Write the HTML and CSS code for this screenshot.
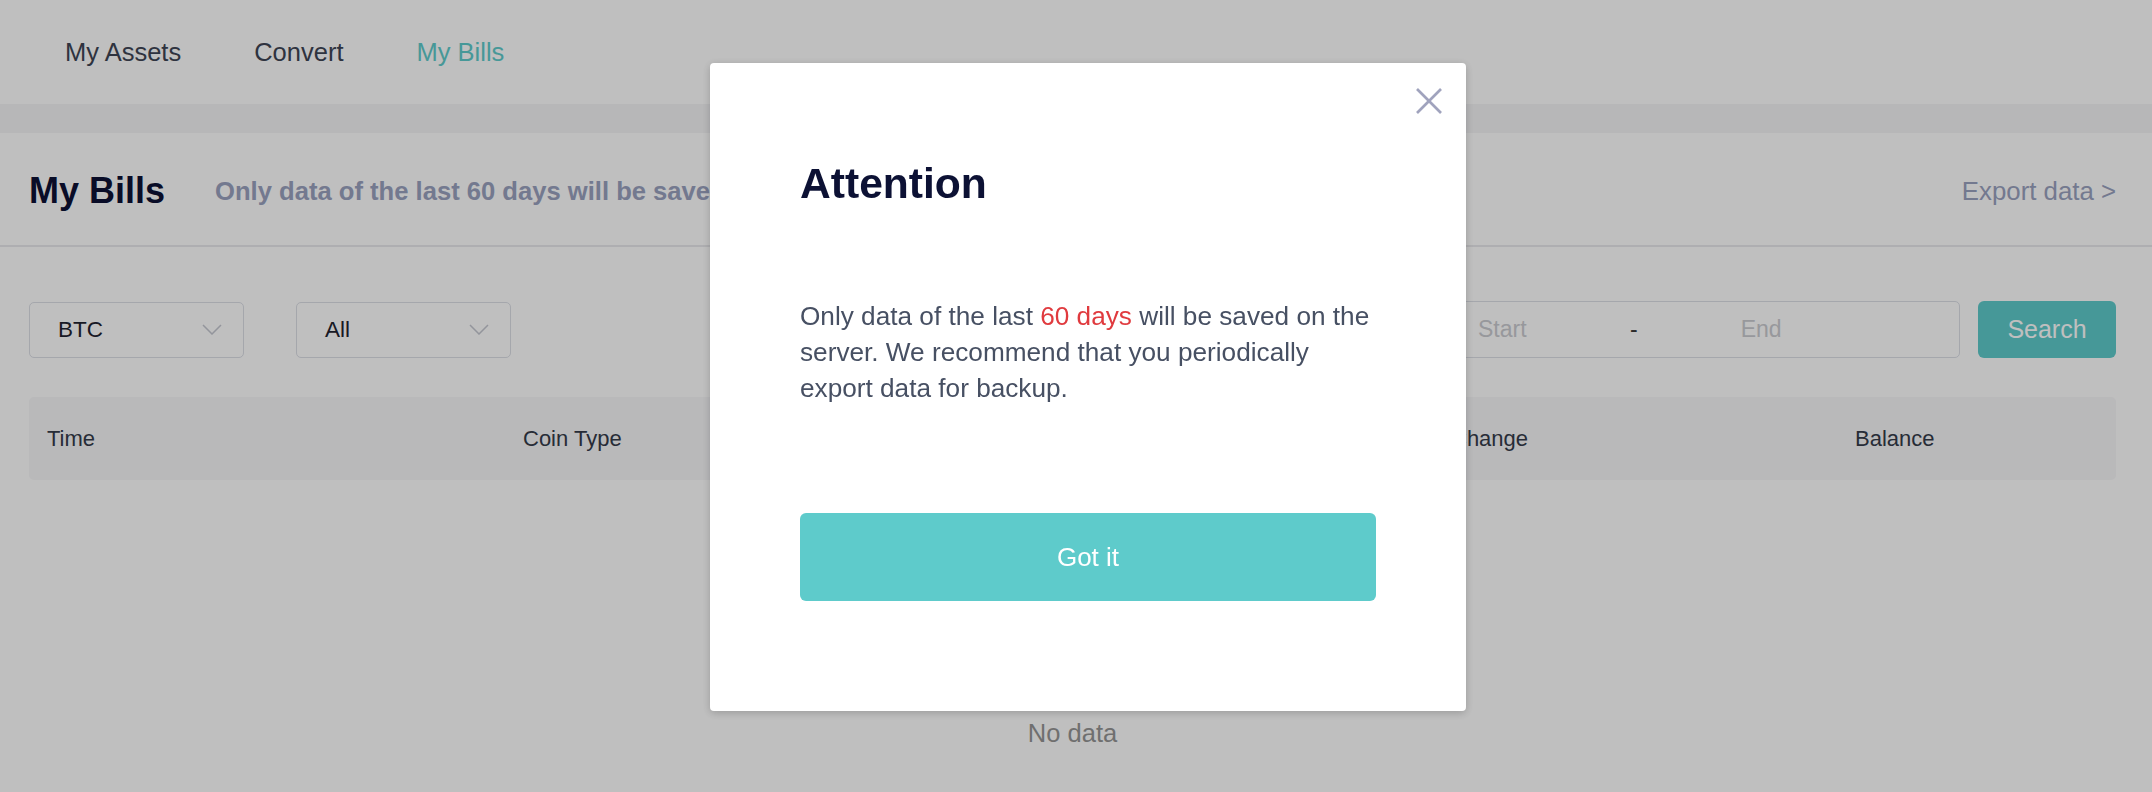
FILE: index.html
```html
<!DOCTYPE html>
<html lang="en">
<head>
    <meta charset="UTF-8">
    <meta name="viewport" content="width=device-width, initial-scale=1.0">
    <title>My Bills</title>
    <link rel="stylesheet" href="styles.css">
</head>
<body>
    <div class="topnav">
        <a href="#" class="navlink">My Assets</a>
        <a href="#" class="navlink">Convert</a>
        <a href="#" class="navlink active">My Bills</a>
    </div>
    <div class="strip"></div>

    <div class="pagehead">
        <h1 class="title">My Bills</h1>
        <span class="notice">Only data of the last 60 days will be saved on the server</span>
        <a href="#" class="export">Export data &gt;</a>
    </div>

    <div class="page">
        <div class="filters">
            <div class="select">
                <span>BTC</span>
                <svg class="chev" width="20" height="11" viewBox="0 0 20 11"><polyline points="1,1 10,10 19,1" /></svg>
            </div>
            <div class="select select-type">
                <span>All</span>
                <svg class="chev" width="20" height="11" viewBox="0 0 20 11"><polyline points="1,1 10,10 19,1" /></svg>
            </div>
            <div class="daterange">
                <span class="ph ph-start">Start</span>
                <span class="dash">-</span>
                <span class="ph ph-end">End</span>
            </div>
            <button class="search">Search</button>
        </div>

        <div class="thead">
            <span class="col col-time">Time</span>
            <span class="col col-coin">Coin Type</span>
            <span class="col col-type">Type</span>
            <span class="col col-change">Change</span>
            <span class="col">Balance</span>
        </div>
        <div class="empty">No data</div>
    </div>

    <!-- notice dialog -->
    <div class="mask"></div>
    <div class="dialog">
        <svg class="close" width="28" height="28" viewBox="0 0 28 28">
            <line x1="2" y1="2" x2="26" y2="26" />
            <line x1="26" y1="2" x2="2" y2="26" />
        </svg>
        <h2 class="dialog-title">Attention</h2>
        <p class="dialog-text">Only data of the last <span class="red">60 days</span> will be saved on the server. We recommend that you periodically export data for backup.</p>
        <button class="gotit">Got it</button>
    </div>
</body>
</html>
```

FILE: styles.css
```css
body {
    margin: 0;
    background: #fff;
    font-family: "Liberation Sans", Arial, sans-serif;
}

.topnav {
    height: 104px;
    display: flex;
    align-items: center;
    gap: 73px;
    padding-left: 65px;
}
.navlink {
    font-size: 25.5px;
    color: #3e4555;
    text-decoration: none;
}
.navlink.active {
    color: #5ecbcb;
}
.strip {
    height: 29px;
    background: #f4f4f6;
}

.pagehead {
    height: 114px;
    display: flex;
    align-items: center;
    padding: 4px 36px 0 29px;
    box-sizing: border-box;
    border-bottom: 2px solid #e9e9ec;
}
.title {
    margin: 0;
    font-size: 36px;
    font-weight: 700;
    color: #0c1134;
}
.notice {
    margin-left: 50px;
    font-size: 25.6px;
    font-weight: 700;
    color: #9aa2bf;
}
.export {
    margin-left: auto;
    font-size: 25.8px;
    color: #9aa2bf;
    text-decoration: none;
}

.page {
    padding: 0 36px 0 29px;
}
.filters {
    display: flex;
    align-items: center;
    margin-top: 54px;
    height: 57px;
}
.select {
    box-sizing: border-box;
    width: 215px;
    height: 56px;
    display: flex;
    align-items: center;
    justify-content: space-between;
    padding: 0 21px 0 28px;
    border: 1px solid #dcdfe6;
    border-radius: 5px;
    font-size: 22.5px;
    color: #1f2330;
}
.select-type {
    margin-left: 52px;
}
.chev polyline {
    fill: none;
    stroke: #c4c7d0;
    stroke-width: 1.5;
}
.daterange {
    box-sizing: border-box;
    margin-left: auto;
    width: 560px;
    height: 57px;
    display: flex;
    align-items: center;
    padding-left: 77px;
    border: 1px solid #dcdfe6;
    border-radius: 5px;
    font-size: 23px;
}
.ph {
    color: #cacbd0;
}
.ph-start {
    width: 152px;
}
.dash {
    color: #3a3a3a;
}
.ph-end {
    margin-left: 103px;
}
.search {
    margin-left: 18px;
    width: 138px;
    height: 57px;
    border: none;
    border-radius: 6px;
    background: #5ecbcb;
    color: #fff;
    font-family: inherit;
    font-size: 25px;
}

.thead {
    margin-top: 39px;
    height: 83px;
    display: flex;
    align-items: center;
    padding-left: 18px;
    background: #f7f7f9;
    border-radius: 5px;
    font-size: 22px;
    color: #343b4a;
}
.col-time { width: 476px; }
.col-coin { width: 464px; }
.col-type { width: 464px; }
.col-change { width: 404px; }

.empty {
    padding-top: 238px;
    line-height: 30px;
    text-align: center;
    font-size: 25.5px;
    color: #959595;
}

.mask {
    position: fixed;
    inset: 0;
    background: rgba(0, 0, 0, 0.25);
}
.dialog {
    position: fixed;
    left: 710px;
    top: 63px;
    box-sizing: border-box;
    width: 756px;
    height: 648px;
    padding: 95px 90px 110px 90px;
    background: #fff;
    border-radius: 4px;
    box-shadow: 0 2px 8px rgba(0, 0, 0, 0.2);
}
.close {
    position: absolute;
    right: 23px;
    top: 24px;
}
.close line {
    stroke: #a0a3bd;
    stroke-width: 2.6;
}
.dialog-title {
    margin: 0;
    font-size: 42.6px;
    line-height: 50px;
    font-weight: 700;
    color: #0c1134;
}
.dialog-text {
    margin: 90px 0 0 0;
    width: 580px;
    font-size: 26.2px;
    line-height: 36px;
    color: #475063;
}
.red {
    color: #e03a3e;
}
.gotit {
    display: block;
    margin-top: 107px;
    width: 100%;
    height: 88px;
    border: none;
    border-radius: 6px;
    background: #5ecbcb;
    color: #fff;
    font-family: inherit;
    font-size: 26px;
}
```
